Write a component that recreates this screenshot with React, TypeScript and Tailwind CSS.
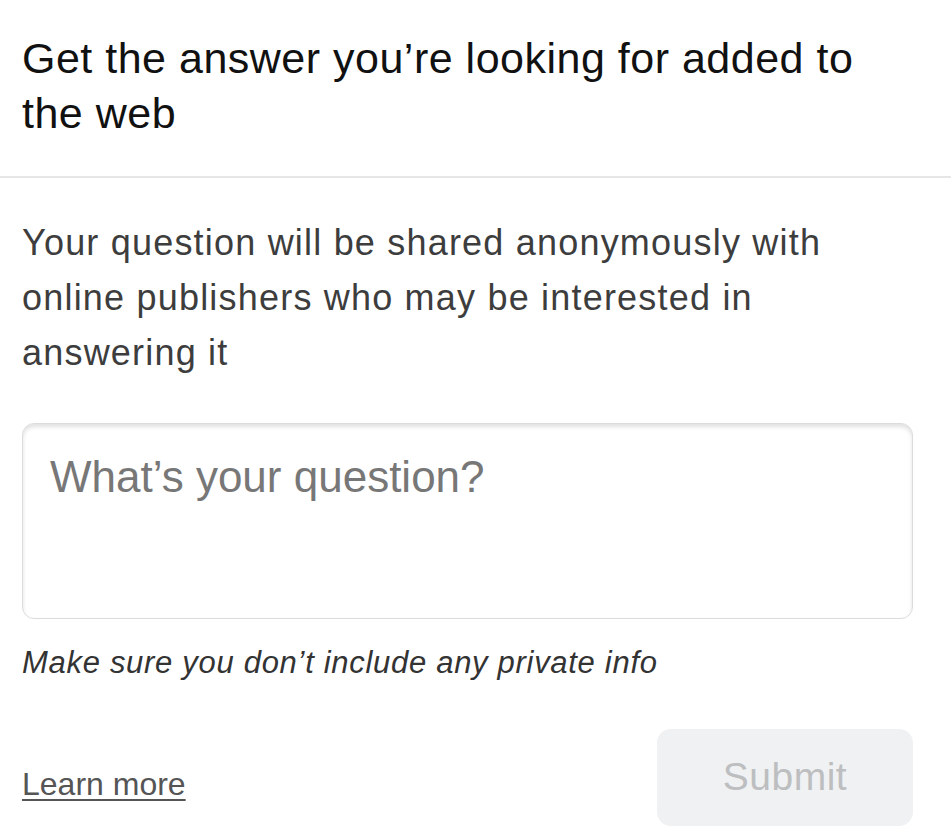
import { useState } from 'react';

const FONT = '"Liberation Sans", Arial, Helvetica, sans-serif';

function App() {
  const [question, setQuestion] = useState('');

  return (
    <div className="min-h-screen w-[951px] bg-white" style={{ fontFamily: FONT }}>
      {/* header */}
      <header className="border-b-2 border-[#e6e6e6] pl-[22px] pr-[38px] pt-[31px] pb-[35px]">
        <h1 className="text-[43px] leading-[55px] tracking-[0.5px] text-[#111]">
          Get the answer you’re looking for added to the web
        </h1>
      </header>

      <main className="pl-[22px] pr-[38px]">
        <p className="mt-[37px] text-[36px] leading-[55px] tracking-[1.2px] text-[#3d3d3d]">
          Your question will be shared anonymously with online publishers who may be interested in answering it
        </p>

        <textarea
          value={question}
          onChange={(e) => setQuestion(e.target.value)}
          placeholder="What’s your question?"
          className="mt-[43px] block h-[196px] w-full resize-none rounded-[12px] border border-[#dcdcdc] px-[27px] pt-[28px] text-[44px] leading-[50px] text-[#222] shadow-[inset_0_3px_4px_rgba(0,0,0,0.12)] outline-none placeholder:text-[#777]"
        />

        <p className="mt-[24px] text-[31px] italic leading-[40px] tracking-[0.7px] text-[#333]">
          Make sure you don’t include any private info
        </p>

        <div className="mt-[46px] flex items-end justify-between">
          <a href="#" className="mb-[22px] text-[32px] leading-[40px] text-[#555] underline decoration-2 underline-offset-4">
            Learn more
          </a>
          <button
            disabled
            className="flex h-[97px] w-[256px] items-center justify-center rounded-[14px] bg-[#f0f1f3] text-[39px] tracking-[0.5px] text-[#bdbec0]"
          >
            Submit
          </button>
        </div>
      </main>
    </div>
  );
}

export default App;
